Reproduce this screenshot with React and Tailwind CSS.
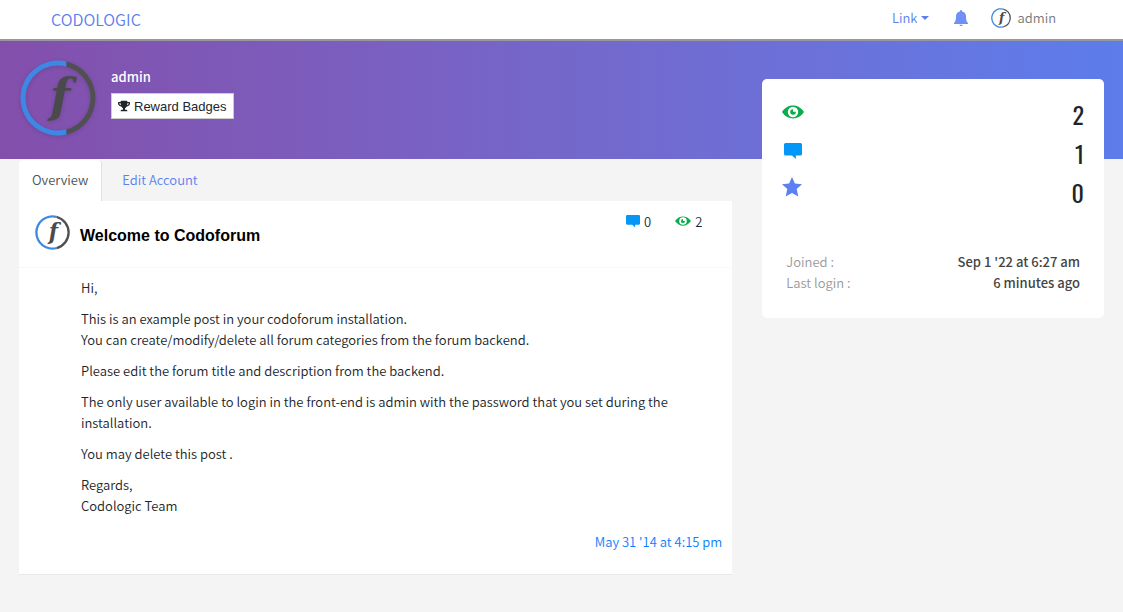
import React from "react";
import { FaTrophy } from "react-icons/fa";

const body = "font-['Noto_Sans_CJK_SC',sans-serif]";

function Logo({ className }) {
  return (
    <svg viewBox="0 0 76 76" className={className} aria-hidden="true">
      <path fill="#3d88e4" d="M46.500 1.480A37.500 37.500 0 1 0 46.500 74.520V69.370A32.500 32.500 0 1 1 46.500 6.630Z" />
      <path fill="#505053" d="M46.500 1.480A37.500 37.500 0 0 1 46.500 74.520V69.370A32.500 32.500 0 0 0 46.500 6.630Z" />
      <text x="30" y="52" fontSize="47" fontWeight="bold" fontStyle="italic" fill="#4a4a4c" fontFamily="DejaVu Serif, serif">f</text>
    </svg>
  );
}

function Eye({ className }) {
  return (
    <svg viewBox="0 0 22 14" className={className} aria-hidden="true">
      <path fill="#0aad4b" fillRule="evenodd" d="M0 7C3 2.5 7 .6 11 .6S19 2.5 22 7c-3 4.5-7 6.400-11 6.400S3 11.500 0 7Zm11-5.200a5.200 5.200 0 1 0 0 10.400 5.200 5.200 0 0 0 0-10.400Z" />
      <path fill="#0aad4b" d="M11 4.200v2.600h2.800A2.800 2.800 0 1 1 11 4.200Z" />
    </svg>
  );
}

function Comment({ className }) {
  return (
    <svg viewBox="0 0 18 16" className={className} aria-hidden="true">
      <path fill="#0597f8" d="M1.500 0h15A1.500 1.500 0 0 1 18 1.500v9.500a1.500 1.500 0 0 1-1.500 1.500H11.800V16L8 12.500H1.500A1.500 1.500 0 0 1 0 11V1.500A1.500 1.500 0 0 1 1.500 0Z" />
    </svg>
  );
}

function Star({ className }) {
  return (
    <svg viewBox="0 0 20 27" className={className} aria-hidden="true">
      <path fill="#5c80ef" d="m10 0 2.900 6.500 7.100.8-5.300 4.800 1.600 7.400L10 15.900l-6.300 3.600 1.600-7.400L0 7.300l7.100-.8Z" />
    </svg>
  );
}

function Bell({ className }) {
  return (
    <svg viewBox="0 0 14 16" className={className} aria-hidden="true">
      <path fill="#6f90f4" d="M6 1a1 1 0 0 1 2 0v.5c2.400.4 4 2.300 4 4.500 0 4 .5 5.700 2 7v1H0v-1c1.500-1.300 2-3 2-7 0-2.200 1.600-4.100 4-4.500ZM5.500 14.700h3a1.500 1.500 0 0 1-3 0Z" />
    </svg>
  );
}

const stats = [
  { label: "Views", value: 2, icon: <Eye className="w-[22px]" /> },
  { label: "Posts", value: 1, icon: <Comment className="ml-0.5 w-[18px]" /> },
  { label: "Reputation", value: 0, icon: <Star className="w-5" /> },
];

export default function App() {
  return (
    <div className={`min-h-screen bg-[#f4f4f4] text-[13px] leading-[21px] font-[350] text-[#212529] ${body}`}>
      <header className="flex h-[41px] items-center justify-between border-b-2 border-[#98979f] bg-white pr-[67px] pb-0.5 pl-[51px]">
        <a href="#home" className="text-base text-[#5c80ef]">CODOLOGIC</a>
        <nav className="flex items-center pb-0.5">
          <button className="flex items-center gap-1 text-[#5c80ef]">
            Link
            <svg viewBox="0 0 8 4" className="w-2" aria-hidden="true"><path d="M0 0h8L4 4Z" fill="currentColor" /></svg>
          </button>
          <button aria-label="Notifications" className="ml-[25px]"><Bell className="w-3.5" /></button>
          <a href="#profile" className="ml-[23px] flex items-center gap-1.5 text-[#777]">
            <Logo className="w-5" />
            admin
          </a>
        </nav>
      </header>

      <section className="flex h-[118px] gap-[15px] bg-linear-to-r from-[#834fab] to-[#5c7deb] px-5 pt-[19px]">
        <Logo className="h-[76px] w-[76px] drop-shadow-sm" />
        <div className="flex flex-col items-start gap-1.5 pt-1.5">
          <h1 className="font-medium text-white">admin</h1>
          <button className="flex h-[26px] items-center gap-1 border border-[#ccc] bg-white px-1.5 font-['Liberation_Sans',sans-serif] text-[#212529]">
            <FaTrophy className="h-3 w-3" />
            Reward Badges
          </button>
        </div>
      </section>

      <div className="flex items-start px-1">
        <main className="w-2/3 px-[15px] pb-9">
          <nav className="flex pt-px">
            <a href="#overview" className="rounded-t border-r border-[#dee2e6] bg-white px-[13px] pt-[9px] pb-[11px] text-[#495057]">Overview</a>
            <a href="#edit" className="px-5 pt-[9px] pb-[11px] text-[#5c80ef]">Edit Account</a>
          </nav>
          <article className="border-b border-[#e8e8e8] bg-white">
            <header className="flex items-start border-b border-dotted border-[#f2f2f2] px-4 pt-3.5 pb-[17px]">
              <Logo className="w-[35px]" />
              <h2 className="mt-[9px] ml-2.5 grow font-['Liberation_Sans',sans-serif] text-base font-bold text-black">Welcome to Codoforum</h2>
              <div className="-mt-1 mr-3.5 flex gap-6 font-[350]">
                <span className="flex items-center gap-1"><Comment className="w-3.5" />0</span>
                <span className="flex items-center gap-1"><Eye className="w-4" />2</span>
              </div>
            </header>
            <div className="space-y-2.5 pt-[9px] pr-10 pl-[62px]">
              <p>Hi,</p>
              <p>This is an example post in your codoforum installation.<br />You can create/modify/delete all forum categories from the forum backend.</p>
              <p>Please edit the forum title and description from the backend.</p>
              <p>The only user available to login in the front-end is admin with the password that you set during the installation.</p>
              <p>You may delete this post .</p>
              <p>Regards,<br />Codologic Team</p>
            </div>
            <footer className="px-2.5 pt-[15px] pb-[22px] text-right">
              <a href="#post" className="text-[#0a7cff]">May 31 '14 at 4:15 pm</a>
            </footer>
          </article>
        </main>

        <aside className="-mt-20 w-1/3 px-[15px]">
          <div className="rounded-[5px] bg-white px-5 pt-4 pb-[25px]">
            <ul>
              {stats.map((s) => (
                <li key={s.label} className="flex h-[39px] items-start justify-between" title={s.label}>
                  <span className="flex h-[34px] items-center">{s.icon}</span>
                  <span className="font-['Oswald','Roboto_Condensed','Open_Sans_Condensed','DejaVu_Sans_Condensed',sans-serif] text-2xl leading-[38px] font-normal">{s.value}</span>
                </li>
              ))}
            </ul>
            <dl className="mt-[39px] px-1">
              <div className="flex justify-between"><dt className="text-[#999]">Joined :</dt><dd className="font-medium text-[#444]">Sep 1 '22 at 6:27 am</dd></div>
              <div className="flex justify-between"><dt className="text-[#999]">Last login :</dt><dd className="font-medium text-[#444]">6 minutes ago</dd></div>
            </dl>
          </div>
        </aside>
      </div>
    </div>
  );
}
